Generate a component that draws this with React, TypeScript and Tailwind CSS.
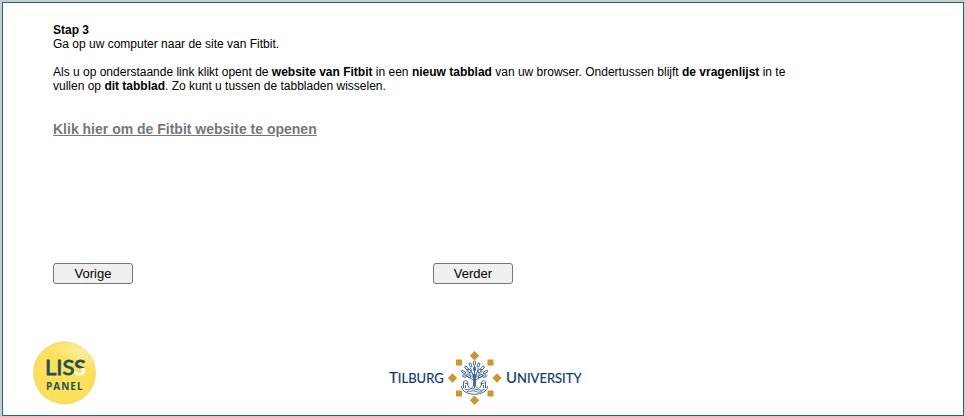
const LEAVES = [
  [86, 13, 0], [82, 15, -20], [90, 15, 20], [78, 18, -40], [94, 18, 40], [86, 19, 0],
  [75, 22, -60], [97, 22, 60], [81, 21, -35], [91, 21, 35], [76, 26, -80], [96, 26, 80],
  [80, 26, -60], [92, 26, 60],
]

function LissLogo() {
  return (
    <svg width="64" height="64" viewBox="0 0 64 64" role="img" aria-label="LISS Panel">
      <defs>
        <radialGradient id="ball" cx="0.5" cy="0.5" r="0.5">
          <stop offset="0" stopColor="#fee25a" />
          <stop offset="0.85" stopColor="#fce05a" />
          <stop offset="1" stopColor="#f6dc62" />
        </radialGradient>
        <radialGradient id="shine" cx="0.85" cy="0.2" r="0.6">
          <stop offset="0" stopColor="#fff" stopOpacity="0.45" />
          <stop offset="1" stopColor="#fff" stopOpacity="0.05" />
        </radialGradient>
        <linearGradient id="lastLetter" gradientUnits="userSpaceOnUse" x1="45" y1="17" x2="49" y2="34">
          <stop offset="0.6" stopColor="#1c5158" />
          <stop offset="0.64" stopColor="#fff" />
        </linearGradient>
      </defs>
      <circle cx="31.5" cy="32" r="31.5" fill="url(#ball)" />
      <path d="M4 17C13 2 34-3 49 6c9 6 14 17 13 27C53 21 34 10 4 17Z" fill="url(#shine)" />
      <g strokeWidth="0.800" fontFamily="Lato, sans-serif" fontSize="22">
        <text x="12" y="34" fill="#1c5158" stroke="#1c5158">LIS</text>
        <text x="41" y="34" fill="url(#lastLetter)" stroke="url(#lastLetter)">S</text>
      </g>
      <text x="13" y="49" fill="#1c5158" fontFamily="'Open Sans', sans-serif" fontSize="10" fontWeight="700" letterSpacing="1">
        PANEL
      </text>
    </svg>
  )
}

function TilburgLogo() {
  return (
    <svg width="196" height="64" viewBox="0 0 196 64" role="img" aria-label="Tilburg University">
      <g fill="#12386b" stroke="#12386b" strokeWidth="0.200" fontFamily="Lato, sans-serif">
        <text x="1" y="42" fontSize="15">
          T<tspan fontSize="13">ILBURG</tspan>
        </text>
        <text x="118" y="42" fontSize="15">
          U<tspan fontSize="13">NIVERSITY</tspan>
        </text>
      </g>
      <g fill="#cb9733">
        <path d="M86.500 10l4.700 4.700-4.700 4.700-4.700-4.700zM86.500 54.500l4.700 4.700-4.700 4.700-4.700-4.700zM64.500 32.300l4.700 4.700-4.700 4.700-4.700-4.700zM109 32.300l4.700 4.700-4.700 4.700-4.700-4.700z" />
        <path d="M68 18.500h6v6h-6zM99.500 18.500h6v6h-6zM68 49.500h6v6h-6zM99.500 49.500h6v6h-6z" />
      </g>
      <g transform="translate(0.500 9)" fill="none" stroke="#315b8d" strokeWidth="0.900">
        {LEAVES.map(([x, y, angle]) => (
          <ellipse key={`${x}-${y}`} cx={x} cy={y} rx="1.100" ry="2.300" transform={`rotate(${angle} ${x} ${y})`} />
        ))}
        <path d="M85 24v12l-3 3M87 24v12l3 3M86 15v23M85 28l-7-7M87 28l7-7M85 30l-7-4M87 30l7-4M85 27l-3-9M87 27l3-9" />
        <path d="M75 38v-6l2-2 2 2v3l2 3M76 33l4 1M77 35v3M97 38v-6l-2-2-2 2v3l-2 3M96 33l-4 1M95 35v3" />
        <path d="M73 36c0 11 26 11 26 0M76 39c3 2 6-1 10 0s7 2 10 0M78 41c3 2 5-1 8 0s5 2 8 0" />
      </g>
    </svg>
  )
}

const buttonClass =
  'h-[21px] w-20 rounded-[3px] border border-[#767676] bg-[#efefef] text-[13px] leading-[19px] text-black hover:bg-[#e5e5e5]'

export default function App() {
  return (
    <div className="flex min-h-screen flex-col bg-[#c8cccc] pt-0.5 pr-px pb-px pl-0.5 font-['Liberation_Sans',Arial,sans-serif] text-xs leading-[14px] text-black">
      <main className="flex flex-1 flex-col border border-[#1f6a70] bg-white">
        <div className="max-w-[810px] pt-5 pl-[50px]">
          <h1 className="font-bold">Stap 3</h1>
          <p>Ga op uw computer naar de site van Fitbit.</p>
          <p className="mt-3.5">
            Als u op onderstaande link klikt opent de <b>website van Fitbit</b> in een <b>nieuw tabblad</b> van
            uw browser. Ondertussen blijft <b>de vragenlijst</b> in te vullen op <b>dit tabblad</b>. Zo kunt u
            tussen de tabbladen wisselen.
          </p>
          <a
            href="https://www.fitbit.com"
            target="_blank"
            rel="noreferrer"
            className="mt-7 inline-block text-sm leading-4 font-bold text-[#777] underline"
          >
            Klik hier om de Fitbit website te openen
          </a>
          <div className="mt-[126px] grid grid-cols-2">
            <div>
              <button type="button" className={buttonClass}>Vorige</button>
            </div>
            <div>
              <button type="button" className={buttonClass}>Verder</button>
            </div>
          </div>
        </div>

        <footer className="mt-auto grid grid-cols-[355px_1fr] pb-2.5 pl-[30px]">
          <LissLogo />
          <TilburgLogo />
        </footer>
      </main>
    </div>
  )
}
